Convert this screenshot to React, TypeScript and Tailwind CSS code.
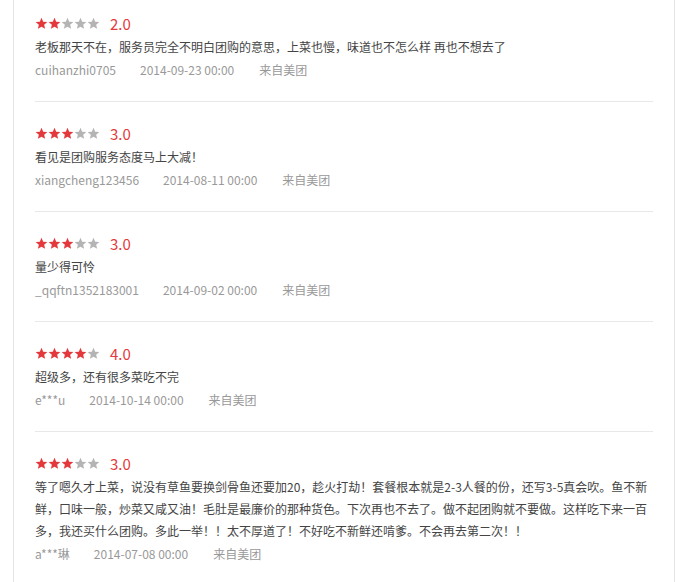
import React from "react";

type Review = {
  score: number;
  text: string;
  user: string;
  date: string;
  from: string;
};

const reviews: Review[] = [
  {
    score: 2,
    text: "老板那天不在，服务员完全不明白团购的意思，上菜也慢，味道也不怎么样 再也不想去了",
    user: "cuihanzhi0705",
    date: "2014-09-23 00:00",
    from: "来自美团",
  },
  {
    score: 3,
    text: "看见是团购服务态度马上大减！",
    user: "xiangcheng123456",
    date: "2014-08-11 00:00",
    from: "来自美团",
  },
  {
    score: 3,
    text: "量少得可怜",
    user: "_qqftn1352183001",
    date: "2014-09-02 00:00",
    from: "来自美团",
  },
  {
    score: 4,
    text: "超级多，还有很多菜吃不完",
    user: "e***u",
    date: "2014-10-14 00:00",
    from: "来自美团",
  },
  {
    score: 3,
    text: "等了嗯久才上菜，说没有草鱼要换剑骨鱼还要加20，趁火打劫！套餐根本就是2-3人餐的份，还写3-5真会吹。鱼不新鲜，口味一般，炒菜又咸又油！毛肚是最廉价的那种货色。下次再也不去了。做不起团购就不要做。这样吃下来一百多，我还买什么团购。多此一举！！太不厚道了！不好吃不新鲜还啃爹。不会再去第二次！！",
    user: "a***琳",
    date: "2014-07-08 00:00",
    from: "来自美团",
  },
];

function Star({ on }: { on: boolean }) {
  return (
    <svg viewBox="0 0 24 24" className={on ? "size-[13px] fill-[#e4393c]" : "size-[13px] fill-[#b4b4b4]"} aria-hidden="true">
      <path d="M12 1.5l3.1 7.1 7.7.6-5.9 5 1.8 7.6L12 17.8l-6.7 4 1.8-7.6-5.9-5 7.7-.6z" />
    </svg>
  );
}

function Stars({ score }: { score: number }) {
  return (
    <div className="flex items-center">
      {[1, 2, 3, 4, 5].map((i) => (
        <Star key={i} on={i <= score} />
      ))}
    </div>
  );
}

function ReviewItem({ review }: { review: Review }) {
  return (
    <li className="border-b border-[#e8e8e8] pt-[19px] pb-[20px] first:pt-[11px]">
      <div className="flex h-[25px] items-center">
        <Stars score={review.score} />
        <span className="ml-[10px] text-[15px] leading-none text-[#e4393c]">{review.score.toFixed(1)}</span>
      </div>
      <p className="text-[12px] leading-[22px] text-[#444]">{review.text}</p>
      <div className="mt-[1px] flex text-[12px] leading-[22px] text-[#999]">
        <span className="mr-[24px]">{review.user}</span>
        <span className="mr-[25px]">{review.date}</span>
        <span>{review.from}</span>
      </div>
    </li>
  );
}

export default function App() {
  return (
    <div className="h-[582px] w-[688px] overflow-hidden bg-white font-['Microsoft_YaHei','Noto_Sans_CJK_SC',sans-serif]">
      <div className="mx-[13px] h-full border-x border-[#e5e5e5] px-[21px]">
        <ul>
          {reviews.map((r, i) => (
            <ReviewItem key={i} review={r} />
          ))}
        </ul>
      </div>
    </div>
  );
}
